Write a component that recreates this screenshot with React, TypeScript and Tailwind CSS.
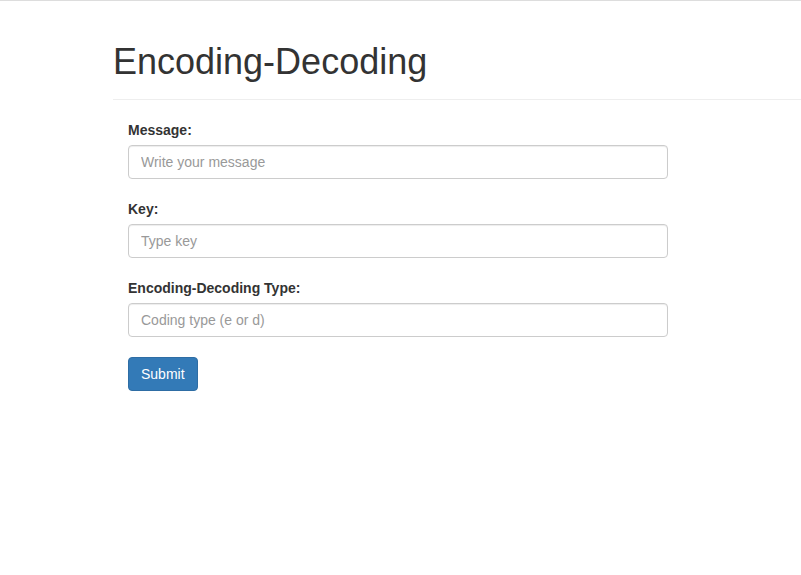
export default function App() {
  const fields = [
    { id: 'message', label: 'Message:', placeholder: 'Write your message' },
    { id: 'key', label: 'Key:', placeholder: 'Type key' },
    { id: 'type', label: 'Encoding-Decoding Type:', placeholder: 'Coding type (e or d)' },
  ];

  return (
    <div className="min-h-screen bg-white border-t border-[#dddddd] text-[#333333] text-[14px] font-['Liberation_Sans',Helvetica,Arial,sans-serif]">
      <div className="pl-[113px]">
        {/* Page header */}
        <div className="border-b border-[#eeeeee] pb-[17px]">
          <h1 className="mt-[41px] text-[36px] leading-[1.1] font-normal">Encoding-Decoding</h1>
        </div>

        {/* Form */}
        <form className="mt-[20px] px-[15px] flex flex-col gap-[20px]" onSubmit={(e) => e.preventDefault()}>
          {fields.map((f) => (
            <div key={f.id} className="flex flex-col">
              <label htmlFor={f.id} className="font-bold leading-[20px] mb-[5px] pt-[1px] -mt-[1px]">
                {f.label}
              </label>
              <input
                id={f.id}
                type="text"
                placeholder={f.placeholder}
                className="w-[540px] h-[34px] px-[12px] py-[6px] border border-[#cccccc] rounded-[4px] text-[14px] text-[#555555] placeholder:text-[#999999] shadow-[inset_0_1px_1px_rgba(0,0,0,0.075)] outline-none"
              />
            </div>
          ))}
          <div>
            <button
              type="submit"
              className="h-[34px] px-[12px] bg-[#337ab7] border border-[#2e6da4] rounded-[4px] text-white text-[14px] leading-[20px]"
            >
              Submit
            </button>
          </div>
        </form>
      </div>
    </div>
  );
}
